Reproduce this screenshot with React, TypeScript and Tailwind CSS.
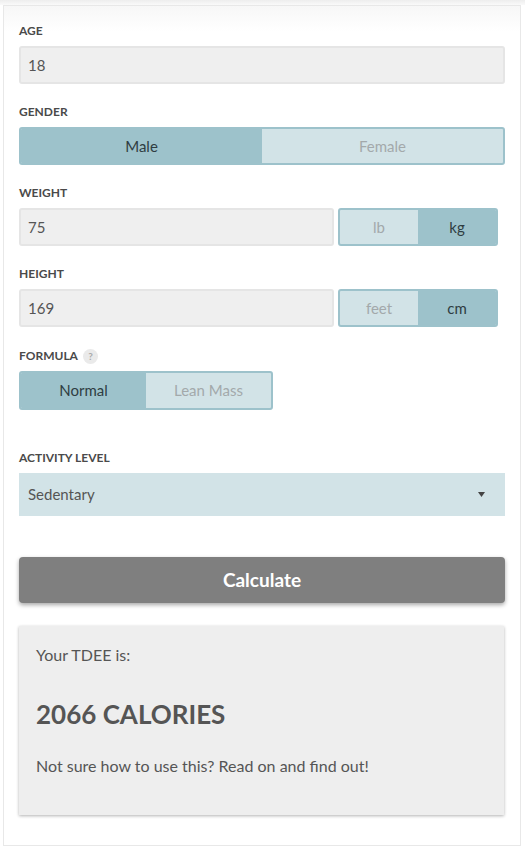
import React from "react";

const font = { fontFamily: '"Lato", "Liberation Sans", sans-serif' };

function Label({ children }: { children: React.ReactNode }) {
  return (
    <div className="flex items-center gap-[5px] text-[12px] font-bold uppercase leading-[16px] text-[#4a4a4a] mb-[7px]">
      {children}
    </div>
  );
}

function TextInput({ value, className = "" }: { value: string; className?: string }) {
  return (
    <div
      className={`h-[38px] flex items-center px-[7px] bg-[#efefef] border-2 border-[#e5e5e5] rounded-[3px] text-[15px] text-[#555] ${className}`}
    >
      {value}
    </div>
  );
}

function Toggle({
  options,
  active,
  className = "",
}: {
  options: string[];
  active: number;
  className?: string;
}) {
  return (
    <div className={`flex border-2 border-[#9dc2cb] bg-[#d2e3e7] rounded-[3px] overflow-hidden ${className}`}>
      {options.map((o, i) => (
        <div
          key={o}
          className={`flex-1 flex items-center justify-center text-[15px] ${
            i === active ? "bg-[#9dc2cb] text-[#2f3d42]" : "text-[#a3a9ab]"
          }`}
        >
          {o}
        </div>
      ))}
    </div>
  );
}

export default function App() {
  return (
    <div className="bg-white min-h-[853px]" style={font}>
      <div className="h-[5px] bg-gradient-to-b from-[#ededed] to-[#fafafa]" />
      <div className="ml-[3px] w-[518px] border border-[#e8e8e8] bg-gradient-to-b from-[#f7f7f7] to-white to-[3%] px-[15px] pt-[17px] pb-[30px]">
        {/* Age */}
        <Label>Age</Label>
        <TextInput value="18" />

        {/* Gender */}
        <div className="mt-[20px]">
          <Label>Gender</Label>
          <Toggle options={["Male", "Female"]} active={0} className="h-[38px]" />
        </div>

        {/* Weight */}
        <div className="mt-[20px]">
          <Label>Weight</Label>
          <div className="flex gap-[4px]">
            <TextInput value="75" className="w-[315px]" />
            <Toggle options={["lb", "kg"]} active={1} className="w-[160px] h-[38px]" />
          </div>
        </div>

        {/* Height */}
        <div className="mt-[20px]">
          <Label>Height</Label>
          <div className="flex gap-[4px]">
            <TextInput value="169" className="w-[315px]" />
            <Toggle options={["feet", "cm"]} active={1} className="w-[160px] h-[38px]" />
          </div>
        </div>

        {/* Formula */}
        <div className="mt-[21px]">
          <Label>
            Formula
            <span className="w-[15px] h-[15px] rounded-full bg-[#eaeaea] text-[#aaa] text-[10px] flex items-center justify-center">
              ?
            </span>
          </Label>
          <Toggle options={["Normal", "Lean Mass"]} active={0} className="w-[254px] h-[39px]" />
        </div>

        {/* Activity level */}
        <div className="mt-[40px]">
          <Label>Activity Level</Label>
          <div className="h-[43px] bg-[#d2e3e7] flex items-center justify-between pl-[9px] pr-[20px] text-[15px] text-[#555]">
            <span>Sedentary</span>
            <svg width="7" height="5" viewBox="0 0 7 5">
              <path d="M0 0h7L3.5 5z" fill="#444" />
            </svg>
          </div>
        </div>

        <button className="mt-[41px] w-full h-[46px] bg-[#7f7f7f] rounded-[4px] text-white font-bold text-[19px] shadow-[0_2px_4px_rgba(0,0,0,0.35)]">
          Calculate
        </button>

        {/* Result */}
        <div className="mt-[23px] w-[485px] h-[189px] bg-[#eeeeee] shadow-[0_1px_3px_rgba(0,0,0,0.3)] px-[17px] pt-[17px] text-[#555]">
          <p className="text-[16px] leading-[24px]">Your TDEE is:</p>
          <p className="mt-[31px] text-[26px] font-bold leading-[32px]">2066 CALORIES</p>
          <p className="mt-[24px] text-[16px] leading-[24px]">Not sure how to use this? Read on and find out!</p>
        </div>
      </div>
    </div>
  );
}
